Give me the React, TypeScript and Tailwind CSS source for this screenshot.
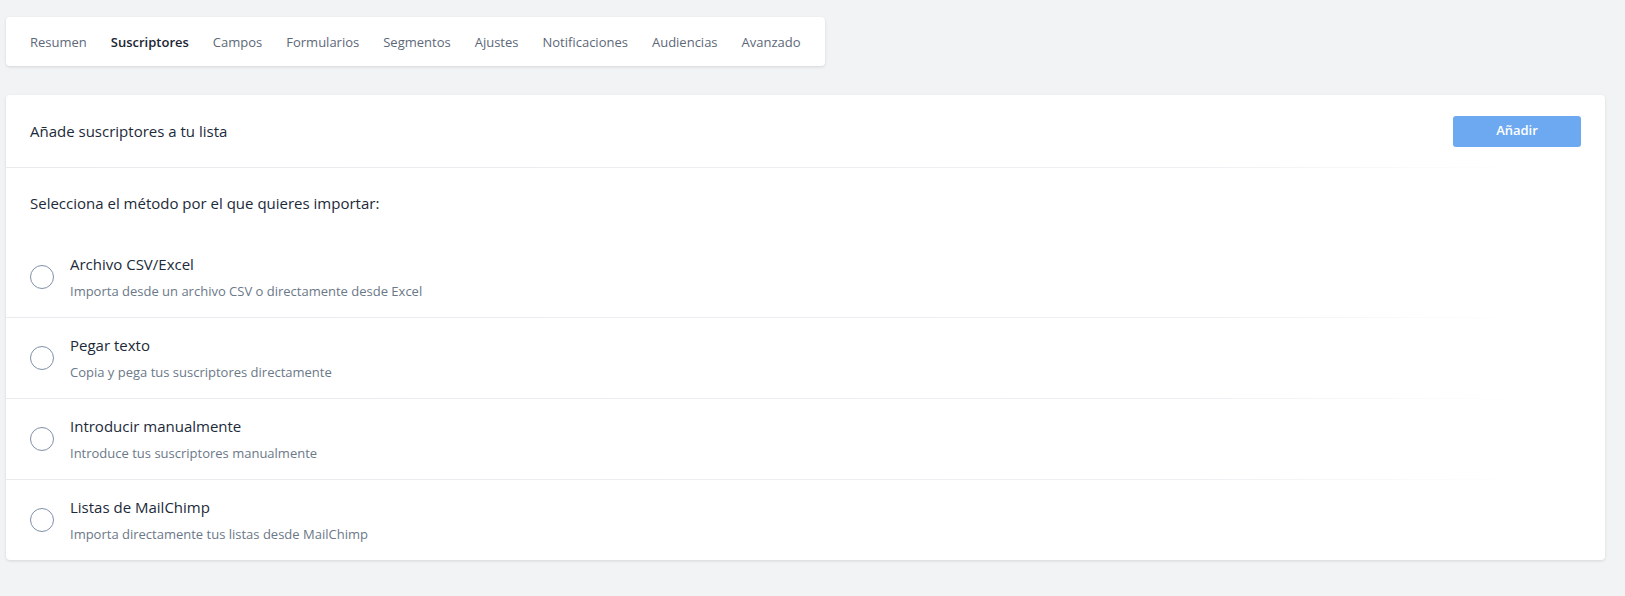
import React from "react";

const tabs = [
  "Resumen",
  "Suscriptores",
  "Campos",
  "Formularios",
  "Segmentos",
  "Ajustes",
  "Notificaciones",
  "Audiencias",
  "Avanzado",
];

const options = [
  { title: "Archivo CSV/Excel", desc: "Importa desde un archivo CSV o directamente desde Excel" },
  { title: "Pegar texto", desc: "Copia y pega tus suscriptores directamente" },
  { title: "Introducir manualmente", desc: "Introduce tus suscriptores manualmente" },
  { title: "Listas de MailChimp", desc: "Importa directamente tus listas desde MailChimp" },
];

function Divider() {
  return <div className="h-px w-full bg-gradient-to-r from-[#e8eaee] via-[#eff0f3] via-75% to-transparent to-95%" />;
}

export default function App() {
  return (
    <div
      className="min-h-[596px] w-full bg-[#f2f3f5] pl-[6px] pr-[20px] pt-[17px] pb-8"
      style={{ fontFamily: '"Open Sans", "Noto Sans", sans-serif' }}
    >
      <nav className="flex h-[49px] w-fit items-center gap-6 rounded-[4px] bg-white px-6 pt-[2px] shadow-[0_1px_3px_rgba(0,0,0,0.12)]">
        {tabs.map((t) => (
          <span
            key={t}
            className={
              t === "Suscriptores"
                ? "text-[13px] font-semibold text-[#1c2533]"
                : "text-[13px] text-[#5d6878]"
            }
          >
            {t}
          </span>
        ))}
      </nav>

      <div className="mt-[29px] rounded-[4px] bg-white shadow-[0_1px_3px_rgba(0,0,0,0.12)]">
        <div className="flex h-[72px] items-center justify-between px-6">
          <h2 className="text-[15px] text-[#1c2a3a]">Añade suscriptores a tu lista</h2>
          <button className="h-[31px] w-[128px] rounded-[3px] bg-[#6da9f1] text-[13px] font-semibold text-white">
            Añadir
          </button>
        </div>
        <Divider />
        <p className="px-6 pt-6 pb-[23px] text-[15px] leading-[22px] text-[#1c2a3a]">
          Selecciona el método por el que quieres importar:
        </p>
        <div className="flex flex-col">
          {options.map((o, i) => (
            <div key={o.title}>
              {i > 0 && <Divider />}
              <div className="flex items-center gap-4 px-6 py-[17px]">
                <span className="h-[24px] w-[24px] shrink-0 rounded-full border-[1.5px] border-[#7f90a6]" />
                <div className="flex flex-col gap-[8px]">
                  <span className="text-[15px] leading-[20px] text-[#1c2a3a]">{o.title}</span>
                  <span className="text-[13px] leading-[18px] text-[#6b7888]">{o.desc}</span>
                </div>
              </div>
            </div>
          ))}
        </div>
      </div>
    </div>
  );
}
